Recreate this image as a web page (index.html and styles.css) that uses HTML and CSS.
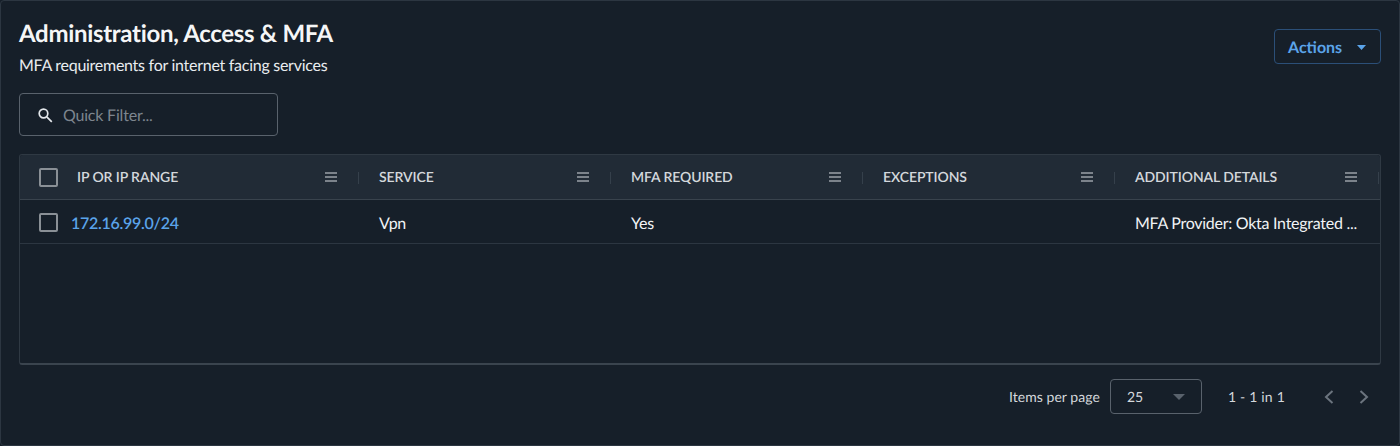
FILE: index.html
```html
<!DOCTYPE html>
<html lang="en">
<head>
<meta charset="utf-8">
<title>Administration, Access &amp; MFA</title>
<link rel="stylesheet" href="styles.css">
</head>
<body>
<section class="card">
  <header class="head">
    <div>
      <h1 class="title">Administration, Access &amp; MFA</h1>
      <p class="subtitle">MFA requirements for internet facing services</p>
    </div>
    <button class="actions">Actions
      <svg class="caret" width="9" height="5" viewBox="0 0 9 5"><path d="M0 0h9L4.500 5z" fill="currentColor"/></svg>
    </button>
  </header>
  <div class="filter">
    <svg width="16" height="16" viewBox="0 0 16 16" fill="none" stroke="#e4e8ec" stroke-width="1.7"><circle cx="6.500" cy="6.500" r="4.300"/><path d="M9.800 9.800l5 5"/></svg>
    <span>Quick Filter...</span>
  </div>
  <div class="table">
    <div class="row header">
      <div class="cell first"><span class="check"></span><span class="label">IP OR IP RANGE</span><svg class="menu" width="12" height="10" viewBox="0 0 12 10"><path d="M0 1h12M0 5h12M0 9h12" stroke="currentColor" stroke-width="1.2"/></svg><i class="sep"></i></div>
      <div class="cell"><span class="label">SERVICE</span><svg class="menu" width="12" height="10" viewBox="0 0 12 10"><path d="M0 1h12M0 5h12M0 9h12" stroke="currentColor" stroke-width="1.2"/></svg><i class="sep"></i></div>
      <div class="cell"><span class="label">MFA REQUIRED</span><svg class="menu" width="12" height="10" viewBox="0 0 12 10"><path d="M0 1h12M0 5h12M0 9h12" stroke="currentColor" stroke-width="1.2"/></svg><i class="sep"></i></div>
      <div class="cell"><span class="label">EXCEPTIONS</span><svg class="menu" width="12" height="10" viewBox="0 0 12 10"><path d="M0 1h12M0 5h12M0 9h12" stroke="currentColor" stroke-width="1.2"/></svg><i class="sep"></i></div>
      <div class="cell"><span class="label">ADDITIONAL DETAILS</span><svg class="menu" width="12" height="10" viewBox="0 0 12 10"><path d="M0 1h12M0 5h12M0 9h12" stroke="currentColor" stroke-width="1.2"/></svg><i class="sep"></i></div>
    </div>
    <div class="row body">
      <div class="cell first"><span class="check"></span><a class="link">172.16.99.0/24</a></div>
      <div class="cell">Vpn</div>
      <div class="cell">Yes</div>
      <div class="cell"></div>
      <div class="cell"><span class="clip">MFA Provider: Okta Integrated ...</span></div>
    </div>
  </div>
  <footer class="pager">
    <span class="per">Items per page</span>
    <div class="select"><span>25</span><svg width="12" height="6" viewBox="0 0 12 6"><path d="M0 0h12L6 6z" fill="#59626c"/></svg></div>
    <span class="range">1 - 1 in 1</span>
    <svg class="nav" width="10" height="14" viewBox="0 0 10 14" fill="none" stroke="#6b747e" stroke-width="2"><path d="M8.500 1L2 7l6.500 6"/></svg>
    <svg class="nav next" width="10" height="14" viewBox="0 0 10 14" fill="none" stroke="#6b747e" stroke-width="2"><path d="M1.500 1L8 7l-6.500 6"/></svg>
  </footer>
</section>
</body>
</html>
```

FILE: styles.css
```css
* { box-sizing: border-box; }
html, body { margin: 0; height: 100%; background: #161f29; }
body { font-family: Lato, "Liberation Sans", sans-serif; color: #f1f3f5; overflow: hidden; text-rendering: geometricPrecision; }
.card {
  width: 1400px; height: 446px;
  border: 1px solid #2c3641; border-radius: 4px;
  background: #161f29;
  padding: 18px 18px 0;
}
.head { display: flex; justify-content: space-between; align-items: flex-start; height: 74px; }
.title { margin: 0; font-size: 24px; line-height: 30px; font-weight: 700; color: #f5f6f7; letter-spacing: -0.31px; }
.subtitle { margin: 7px 0 0; font-size: 16px; line-height: 19px; color: #e9ecef; letter-spacing: -0.27px; }
.actions {
  display: flex; align-items: center; gap: 15px;
  width: 107px; height: 35px; margin-top: 10px; padding: 1px 13px 0;
  border: 1px solid #2b4f78; border-radius: 4px; background: transparent;
  color: #5ba4ea; font: 700 16px Lato, sans-serif; text-rendering: geometricPrecision;
}
.filter {
  display: flex; align-items: center; gap: 10px;
  width: 259px; height: 43px; padding: 0 0 0 17px;
  border: 1px solid #59626c; border-radius: 4px;
  color: #7d858e; font-size: 16px; letter-spacing: -0.2px;
}
.filter span { padding-top: 1px; }
.table {
  margin-top: 18px; width: 1362px; height: 211px;
  border: 1px solid #2f3943; border-bottom: 2px solid #3a444e; border-radius: 3px;
}
.row { display: grid; grid-template-columns: 339px repeat(3, 252px) 264px; align-items: center; }
.header { height: 45px; background: #212b36; border-bottom: 1px solid #39434d; border-radius: 3px 3px 0 0; }
.body { height: 44px; border-bottom: 1px solid #2c3641; font-size: 16px; color: #f1f3f5; letter-spacing: -0.27px; }
.cell { display: flex; align-items: center; padding-left: 20px; min-width: 0; position: relative; height: 100%; }
.body .cell { padding-top: 4px; }
.first { padding-left: 19px; }
.check { flex: none; width: 19px; height: 19px; border: 2px solid #8a9096; border-radius: 2px; }
.body .check { margin-top: -2px; }
.label { font-size: 14px; font-weight: 600; color: #d4d8dc; margin-top: -1px; letter-spacing: -0.1px; }
.header .first .label { margin-left: 19px; }
.menu { position: absolute; right: 22px; top: 17px; color: #d8dce0; }
.sep { position: absolute; right: 0; top: 17px; width: 1px; height: 12px; background: #35404b; }
.link { margin-left: 13px; color: #5ba4ea; font-weight: 600; font-size: 16px; }
.clip { display: block; white-space: nowrap; }
.pager { display: flex; align-items: center; justify-content: flex-end; margin-top: 14px; height: 35px; padding-right: 12px; font-size: 14px; color: #d4d8dc; }
.per { letter-spacing: 0.05px; }
.select {
  display: flex; align-items: center; justify-content: space-between;
  width: 92px; height: 35px; margin-left: 10px; padding: 0 16px;
  border: 1px solid #59626c; border-radius: 4px;
}
.range { margin: 0 39px 0 26px; letter-spacing: 0.2px; }
.next { margin-left: 25px; }
```
